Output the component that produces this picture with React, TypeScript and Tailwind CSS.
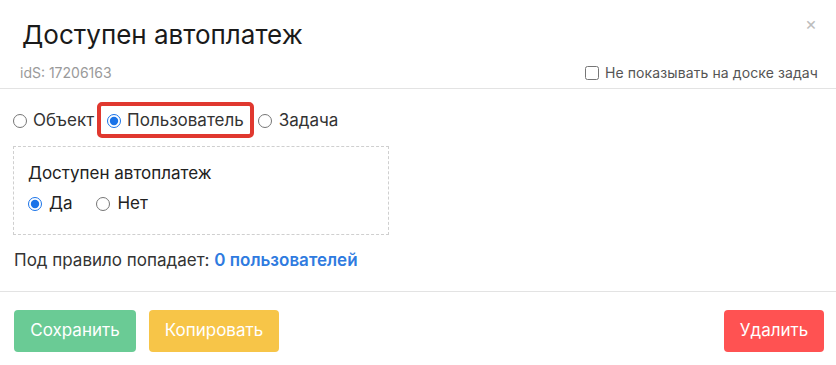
export default function App() {
  return (
    <div className="w-[836px] h-[365px] bg-white text-[#222] font-['Inter','Noto_Sans',sans-serif] relative overflow-hidden">
      {/* шапка */}
      <div className="relative px-5 pt-[17px] h-[89px] border-b border-[#e3e3e3]">
        <h1 className="text-[26px] leading-[36px] font-normal text-[#1a1a1a] ml-[2px]">Доступен автоплатеж</h1>
        <div className="flex items-center justify-between mt-[9px]">
          <span className="text-[14px] text-[#9a9a9a]">idS: 17206163</span>
          <label className="flex items-center gap-[6px] text-[14px] text-[#555] mr-[-2px] tracking-[0.1px]">
            <input type="checkbox" className="w-[14px] h-[14px] m-0 accent-[#1a73e8]" readOnly />
            Не показывать на доске задач
          </label>
        </div>
        <span className="absolute right-[19px] top-[15px] text-[18px] leading-none text-[#bdbdbd]">×</span>
      </div>

      {/* тело */}
      <div className="px-[13px] pt-[13px] h-[203px] border-b border-[#e3e3e3]">
        <div className="flex items-center text-[17px] text-[#333]">
          <label className="flex items-center gap-[6px] pt-[2px]">
            <input type="radio" name="t" className="w-[14px] h-[14px] m-0" readOnly />
            Объект
          </label>
          <div className="ml-[3px] mr-[4px] border-[4px] border-[#e0382f] rounded-[5px] px-[6px] h-[36px] flex items-center">
            <label className="flex items-center gap-[6px] pt-[2px]">
              <input type="radio" name="t" defaultChecked className="w-[14px] h-[14px] m-0 accent-[#1a73e8]" />
              Пользователь
            </label>
          </div>
          <label className="flex items-center gap-[7px] pt-[2px]">
            <input type="radio" name="t" className="w-[14px] h-[14px] m-0" readOnly />
            Задача
          </label>
        </div>

        <div className="mt-[8px] w-[376px] h-[89px] border border-dashed border-[#cfcfcf] pl-[14px] pt-[14px]">
          <div className="text-[17px] text-[#222] leading-[24px]">Доступен автоплатеж</div>
          <div className="flex items-center gap-[24px] mt-[6px] text-[17px] text-[#222]">
            <label className="flex items-center gap-[7px]">
              <input type="radio" name="a" defaultChecked className="w-[14px] h-[14px] m-0 accent-[#1a73e8]" />
              Да
            </label>
            <label className="flex items-center gap-[7px]">
              <input type="radio" name="a" className="w-[14px] h-[14px] m-0" readOnly />
              Нет
            </label>
          </div>
        </div>

        <div className="mt-[13px] text-[17px] text-[#333] pl-[1px]">
          Под правило попадает: <span className="font-semibold text-[#2f7be0]">0 пользователей</span>
        </div>
      </div>

      {/* кнопки */}
      <div className="flex items-center px-[14px] pt-[18px]">
        <button className="w-[122px] h-[42px] rounded-[4px] bg-[#6acb95] text-white text-[17px]">Сохранить</button>
        <button className="ml-[13px] w-[130px] h-[42px] rounded-[4px] bg-[#f7c548] text-white text-[17px]">Копировать</button>
        <button className="ml-auto mr-[-2px] w-[100px] h-[42px] rounded-[4px] bg-[#ff5252] text-white text-[17px]">Удалить</button>
      </div>
    </div>
  );
}
